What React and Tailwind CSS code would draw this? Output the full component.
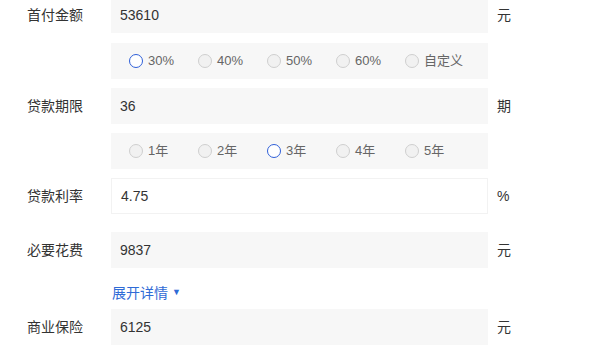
import React, { useState } from "react";

const font = { fontFamily: '"Liberation Sans", "Noto Sans CJK SC", sans-serif' };

const downOptions = ["30%", "40%", "50%", "60%", "自定义"];
const yearOptions = ["1年", "2年", "3年", "4年", "5年"];

const InputRow = ({ label, value, unit, white, className }) => (
  <div className={"flex items-center " + className}>
    <div className="w-[84px] text-[14px] text-[#333]">{label}</div>
    <div
      className={
        "w-[377px] h-[36px] flex items-center pl-[9px] text-[14px] text-[#333] " +
        (white ? "bg-white border border-[#f2f2f2]" : "bg-[#f7f7f7]")
      }
    >
      {value}
    </div>
    <div className="ml-[9px] text-[14px] text-[#333]">{unit}</div>
  </div>
);

const RadioRow = ({ options, selected, onSelect, className }) => (
  <div className={"flex " + className}>
    <div className="w-[84px]" />
    <div className="w-[377px] h-[36px] bg-[#f7f7f7] flex items-center pl-[18px]">
      {options.map((opt) => (
        <button
          key={opt}
          onClick={() => onSelect(opt)}
          className="w-[69px] flex items-center gap-[5px] text-[13px] text-[#666]"
        >
          <span
            className={
              "w-[14px] h-[14px] rounded-full " +
              (selected === opt
                ? "border-[1.5px] border-[#2f5fd8] bg-white"
                : "border border-[#cfcfcf] bg-[#f1f1f1]")
            }
          />
          {opt}
        </button>
      ))}
    </div>
  </div>
);

export default function App() {
  const [down, setDown] = useState("30%");
  const [years, setYears] = useState("3年");

  return (
    <div className="w-[600px] h-[350px] overflow-hidden bg-white" style={font}>
      <div className="pl-[27px] mt-[-3px]">
        <InputRow label="首付金额" value="53610" unit="元" />
        <RadioRow options={downOptions} selected={down} onSelect={setDown} className="mt-[10px]" />
        <InputRow label="贷款期限" value="36" unit="期" className="mt-[9px]" />
        <RadioRow options={yearOptions} selected={years} onSelect={setYears} className="mt-[9px]" />
        <InputRow label="贷款利率" value="4.75" unit="%" white className="mt-[9px]" />
        <InputRow label="必要花费" value="9837" unit="元" className="mt-[18px]" />

        {/* 展开详情 */}
        <div className="flex mt-[15px] h-[20px] items-center">
          <div className="w-[85px]" />
          <span className="text-[14px] text-[#2f6bd6] flex items-center gap-[4px]">
            展开详情
            <span className="text-[9px]">▼</span>
          </span>
        </div>

        <InputRow label="商业保险" value="6125" unit="元" className="mt-[6px]" />
      </div>
    </div>
  );
}
